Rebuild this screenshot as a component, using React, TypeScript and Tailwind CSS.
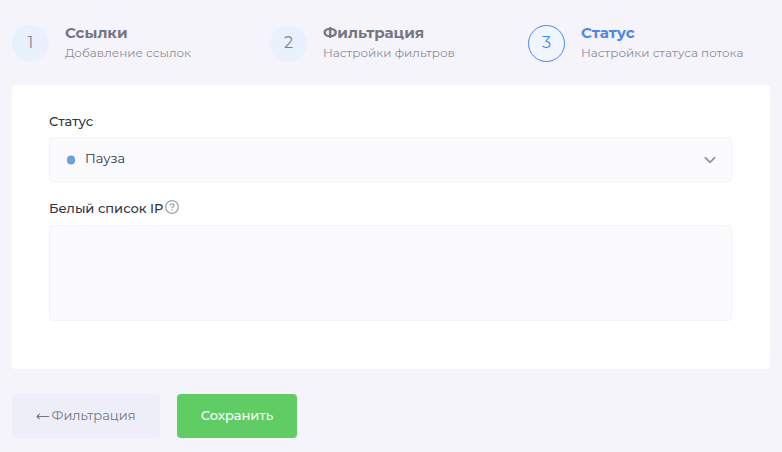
import React, { useState } from 'react';

interface Step {
  id: number;
  title: string;
  description: string;
}

const steps: Step[] = [
  { id: 1, title: 'Ссылки', description: 'Добавление ссылок' },
  { id: 2, title: 'Фильтрация', description: 'Настройки фильтров' },
  { id: 3, title: 'Статус', description: 'Настройки статуса потока' },
];

const App: React.FC = () => {
  const currentStep = 3;
  const [status, setStatus] = useState('pause');
  const [whitelist, setWhitelist] = useState('');

  return (
    <div className="min-h-screen bg-[#f5f4fb] px-3 pt-[23px] pb-3 font-[Montserrat,Inter,sans-serif] text-[13px] leading-5 text-[#32343f]">
      {/* Steps */}
      <ol className="grid grid-cols-3 gap-4">
        {steps.map((step) => {
          const active = step.id === currentStep;
          return (
            <li key={step.id} className="flex items-center gap-4">
              <span
                className={`flex size-[37px] shrink-0 items-center justify-center rounded-full text-base ${
                  active ? 'border border-[#4a86f0] bg-[#f0f6fe] text-[#4a86f0]' : 'bg-[#e9f1fd] text-[#7f818d]'
                }`}
              >
                {step.id}
              </span>
              <div className="whitespace-nowrap">
                <div className={`text-[15px] font-bold ${active ? 'text-[#4a86f0]' : 'text-[#747683]'}`}>{step.title}</div>
                <div className="text-xs leading-5 text-[#8b8d98]">{step.description}</div>
              </div>
            </li>
          );
        })}
      </ol>

      {/* Form */}
      <form id="stream-status" onSubmit={(e) => e.preventDefault()} className="mt-[22px] rounded bg-white pt-[26px] pr-[38px] pb-12 pl-[37px]">
        <label htmlFor="status" className="mb-[6px] block font-medium">
          Статус
        </label>
        <div className="relative">
          <span className="pointer-events-none absolute top-1/2 left-[18px] h-[9px] w-2 -translate-y-1/2 rounded-full bg-[#6ba0e3]"></span>
          <select
            id="status"
            value={status}
            onChange={(e) => setStatus(e.target.value)}
            className="block h-[45px] w-full appearance-none rounded border border-[#f3f2f9] bg-[#fbfbfd] pr-10 pb-1 pl-[35px] text-[13px] outline-none focus:border-[#4a86f0]"
          >
            <option value="pause">Пауза</option>
            <option value="active">Активен</option>
          </select>
          <svg
            viewBox="0 0 12 7"
            fill="none"
            stroke="#8e909c"
            strokeWidth="1.7"
            className="pointer-events-none absolute top-1/2 right-4 h-[7px] w-3 -translate-y-1/2"
          >
            <path d="M.8.7 6 5.8 11.2.7" />
          </svg>
        </div>

        <div className="mt-4 mb-[7px] flex items-start gap-[2px]">
          <label htmlFor="whitelist" className="font-medium">
            Белый список IP
          </label>
          <button type="button" aria-label="Подсказка" className="pt-[2px] text-[#a3a4ad]">
            <svg viewBox="0 0 14 14" fill="none" stroke="currentColor" strokeWidth="1.3" className="size-[14px]">
              <circle cx="7" cy="7" r="6.3" />
              <path d="M5 5.6C5 4.5 5.9 3.8 7 3.8s2 .7 2 1.7c0 1.3-2 1.4-2 2.7" />
              <path d="M7 9.2v1.4" />
            </svg>
          </button>
        </div>
        <textarea
          id="whitelist"
          value={whitelist}
          onChange={(e) => setWhitelist(e.target.value)}
          className="block h-24 w-full resize-none rounded border border-[#f3f2f9] bg-[#fbfbfd] px-4 py-3 outline-none focus:border-[#4a86f0]"
        />
      </form>

      {/* Actions */}
      <div className="mt-[25px] flex gap-[17px]">
        <button
          type="button"
          className="flex h-11 min-w-[148px] items-center justify-center gap-[2px] rounded bg-[#eeeef8] px-5 pb-[2px] text-[#74767f]"
        >
          <svg viewBox="0 0 13 8" fill="none" stroke="currentColor" strokeWidth="1.1" className="mt-[2px] h-2 w-[13px]">
            <path d="M13 4.5H1M3.6 1.9 1 4.5l2.6 2.6" />
          </svg>
          Фильтрация
        </button>
        <button type="submit" form="stream-status" className="h-11 min-w-[120px] rounded bg-[#60cd64] px-5 pb-[2px] font-medium text-white">
          Сохранить
        </button>
      </div>
    </div>
  );
};

export default App;
